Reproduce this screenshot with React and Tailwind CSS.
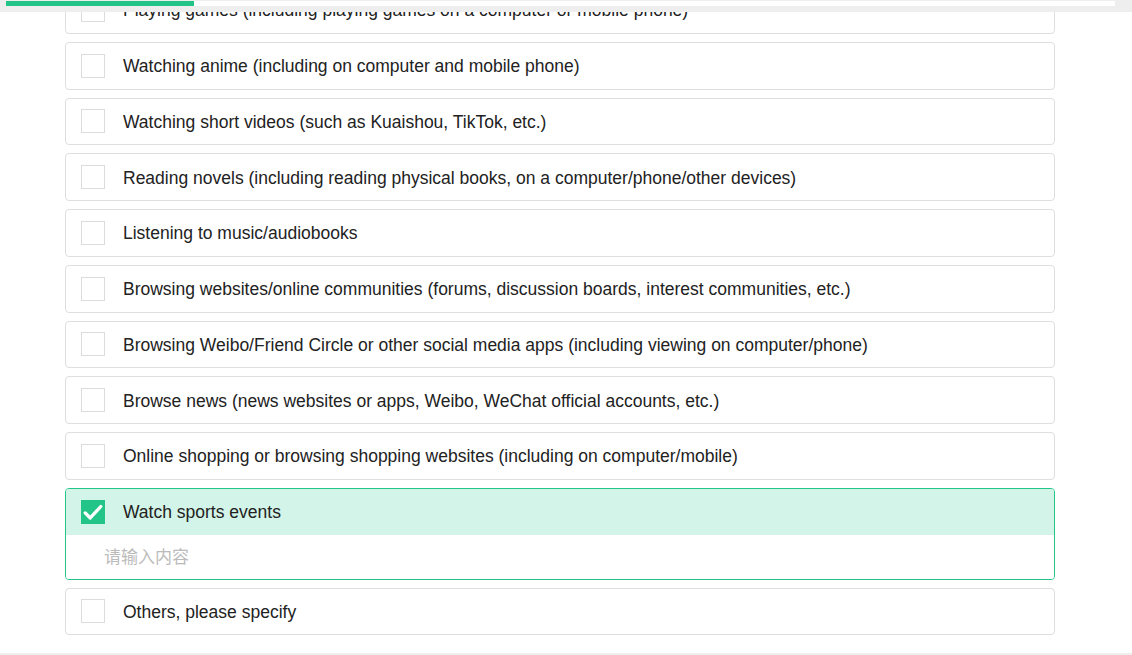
import React, { useState } from 'react';

const options = [
  'Playing games (including playing games on a computer or mobile phone)',
  'Watching anime (including on computer and mobile phone)',
  'Watching short videos (such as Kuaishou, TikTok, etc.)',
  'Reading novels (including reading physical books, on a computer/phone/other devices)',
  'Listening to music/audiobooks',
  'Browsing websites/online communities (forums, discussion boards, interest communities, etc.)',
  'Browsing Weibo/Friend Circle or other social media apps (including viewing on computer/phone)',
  'Browse news (news websites or apps, Weibo, WeChat official accounts, etc.)',
  'Online shopping or browsing shopping websites (including on computer/mobile)',
  'Watch sports events',
  'Others, please specify',
];

const CheckBox = ({ checked }) =>
  checked ? (
    <span className="flex h-[24px] w-[24px] shrink-0 items-center justify-center bg-[#22c487]">
      <svg viewBox="0 0 24 24" className="h-[22px] w-[22px]" fill="none" stroke="white" strokeWidth="3.6" strokeLinecap="round" strokeLinejoin="round">
        <polyline points="3.5,13 9,18.5 20.5,6" />
      </svg>
    </span>
  ) : (
    <span className="h-[24px] w-[24px] shrink-0 border border-[#dcdcdc] bg-white" />
  );

export default function App() {
  const [selected, setSelected] = useState([9]);

  const toggle = (i) =>
    setSelected((s) => (s.includes(i) ? s.filter((x) => x !== i) : [...s, i]));

  return (
    <div
      className="relative h-[655px] w-[1132px] overflow-hidden bg-white"
      style={{ fontFamily: '"Liberation Sans", Arial, sans-serif' }}
    >
      {/* progress header */}
      <div className="absolute left-0 right-0 top-0 z-10 h-[12px] bg-[#eeeeee] pl-[6px] pt-[1px]">
        <div className="h-[5px] w-[1109px] bg-white">
          <div className="h-full w-[188px] bg-[#22c487]" />
        </div>
      </div>

      {/* option list */}
      <div className="-mt-[14px] ml-[65px] flex w-[990px] flex-col gap-2">
        {options.map((label, i) => {
          const on = selected.includes(i);
          if (on) {
            return (
              <div key={i} className="overflow-hidden rounded-[4px] border border-[#22c487]">
                <div
                  onClick={() => toggle(i)}
                  className="flex h-[45.75px] cursor-pointer items-center gap-[18px] bg-[#d3f4e8] pl-[15px]"
                >
                  <CheckBox checked />
                  <span className="pt-[1px] text-[17.5px] text-[#222]">{label}</span>
                </div>
                <input
                  placeholder="请输入内容"
                  className="h-[44px] w-full bg-white pl-[38px] pt-[3px] text-[17px] text-[#333] outline-none placeholder:text-[#bbbbbb]"
                  style={{ fontFamily: '"Liberation Sans", "Noto Sans CJK SC", sans-serif' }}
                />
              </div>
            );
          }
          return (
            <div
              key={i}
              onClick={() => toggle(i)}
              className="flex h-[47.75px] cursor-pointer items-center gap-[18px] rounded-[4px] border border-[#dedede] pl-[15px]"
            >
              <CheckBox />
              <span className="pt-[1px] text-[17.5px] text-[#222]">{label}</span>
            </div>
          );
        })}
      </div>

      {/* footer edge */}
      <div className="absolute bottom-0 left-0 right-0 h-[2px] bg-[#eeeeee]" />
    </div>
  );
}
